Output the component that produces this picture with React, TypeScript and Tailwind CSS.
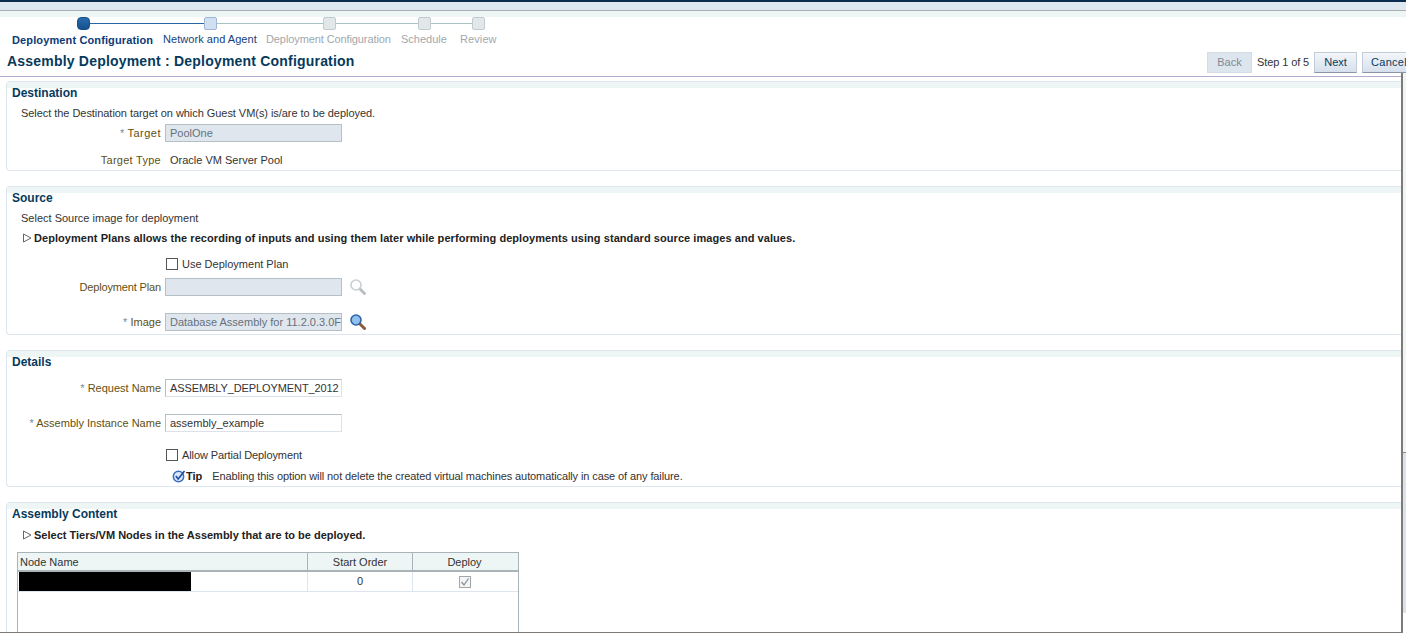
const labelCls = 'w-[154px] shrink-0 text-right text-[#5f5010] whitespace-nowrap';

function Magnifier({ faded }: { faded?: boolean }) {
  return (
    <svg width="18" height="18" viewBox="0 0 18 18" className="ml-[7px] shrink-0">
      <line x1="10.5" y1="10.5" x2="15.5" y2="15.5" stroke={faded ? '#b8c0c0' : '#8a5a3a'} strokeWidth="3" strokeLinecap="round" />
      <circle cx="7" cy="7" r="5" fill={faded ? '#ffffff' : '#8fc0ee'} stroke={faded ? '#c8d0d4' : '#2f62a8'} strokeWidth="1.6" />
    </svg>
  );
}

function Triangle() {
  return (
    <svg width="10" height="10" viewBox="0 0 10 10" className="shrink-0">
      <path d="M1.5 1 L9 5 L1.5 9 Z" fill="#fff" stroke="#555" strokeWidth="0.9" />
    </svg>
  );
}

function Req() {
  return <span className="text-[#7c8a96]">* </span>;
}

function Check({ label, track }: { label: string; track?: string }) {
  return (
    <div className="flex h-[14px] items-center pl-[159px] text-[#333]">
      <span className="h-[12px] w-[12px] border border-[#555] bg-white" />
      <span className={`ml-[4px] ${track ?? ''}`}>{label}</span>
    </div>
  );
}

function Field({ label, req, value, readOnly, icon, className, labelTrack, valueTrack }: { label: string; req?: boolean; value: string; readOnly?: boolean; icon?: 'on' | 'off'; className?: string; labelTrack?: string; valueTrack?: string }) {
  return (
    <div className={`flex h-[18px] items-center ${className ?? ''}`}>
      <div className={labelCls}>
        {req && <Req />}
        <span className={labelTrack}>{label}</span>
      </div>
      <div
        className={`ml-[4px] flex h-[18px] w-[177px] shrink-0 items-center overflow-hidden whitespace-nowrap border px-[4px] ${valueTrack ?? ''} ${
          readOnly ? 'border-[#b4c0c6] bg-[#dfe6ee] text-[#66717c]' : 'border-[#dce3e8] border-t-[#b4c0c6] border-l-[#b4c0c6] bg-white text-[#333]'
        }`}
      >
        {value}
      </div>
      {icon && <Magnifier faded={icon === 'off'} />}
    </div>
  );
}

function Section({ title, h, children, className }: { title: string; h: string; children: React.ReactNode; className?: string }) {
  return (
    <section className={`ml-[6px] rounded-l-[4px] border border-r-0 border-[#dde6ee] ${h} ${className ?? ''}`}>
      <div className="h-[6px] bg-[#eef5f5]" />
      <h2 className="h-[11px] pl-[5px] text-[12px] font-bold leading-[11px] text-[#063a5c]">{title}</h2>
      {children}
    </section>
  );
}

function StepIcon({ kind }: { kind: 'active' | 'next' | 'off' }) {
  const cls =
    kind === 'active'
      ? 'border-[#174f86] bg-gradient-to-b from-[#2a6cae] to-[#16508e] rounded-[4px]'
      : kind === 'next'
        ? 'border-[#9db8d8] bg-[#d2dff0] rounded-[2px]'
        : 'border-[#c2cbce] bg-[#e2e8ea] rounded-[2px]';
  return <span className={`h-[13px] w-[13px] shrink-0 border ${cls}`} />;
}

export default function App() {
  return (
    <div className="flex h-[634px] w-[1406px] flex-col overflow-hidden bg-white font-['Liberation_Sans',Arial,sans-serif] text-[11px] text-[#333]">
      <div className="h-[2px] shrink-0 bg-[#0b2c4e]" />
      <div className="h-[8px] shrink-0 bg-[#dfe8f1]" />
      <div className="h-[1px] shrink-0 bg-[#aab0b2]" />
      <div className="h-[6px] shrink-0 bg-[#eef5f5]" />

      <div className="flex h-[13px] shrink-0 items-center pl-[77px]">
        <StepIcon kind="active" />
        <span className="h-[1px] w-[114px] bg-[#2a66a6]" />
        <StepIcon kind="next" />
        <span className="h-[1px] w-[106px] bg-[#a9c2c2]" />
        <StepIcon kind="off" />
        <span className="h-[1px] w-[82px] bg-[#a9c2c2]" />
        <StepIcon kind="off" />
        <span className="h-[1px] w-[41px] bg-[#a9c2c2]" />
        <StepIcon kind="off" />
      </div>
      <div className="mt-[2px] flex h-[14px] shrink-0 items-center whitespace-nowrap pl-[12px] text-[#a0a8ae]">
        <span className="w-[151px] pt-[2px] font-bold tracking-[0.125px] text-[#0c3a78]">Deployment Configuration</span>
        <span className="w-[103px] tracking-[0.05px] text-[#133f7c]">Network and Agent</span>
        <span className="w-[135px] tracking-[-0.1px]">Deployment Configuration</span>
        <span className="w-[59px]">Schedule</span>
        <span className="tracking-[0.1px]">Review</span>
      </div>

      <div className="mt-[6px] flex h-[21px] shrink-0 items-center">
        <h1 className="w-[1207px] shrink-0 whitespace-nowrap pb-[2px] pl-[7px] text-[14px] font-bold tracking-[0.2px] text-[#063a5c]">Assembly Deployment : Deployment Configuration</h1>
        <div className="flex h-[21px] w-[45px] shrink-0 items-center justify-center border border-[#d4dce4] bg-[#dde5ee] pb-[1px] text-[#7f8a94]">Back</div>
        <span className="ml-[5px] w-[57px] shrink-0 whitespace-nowrap tracking-[-0.1px] text-[#333]">Step 1 of 5</span>
        <div className="flex h-[21px] w-[43px] shrink-0 items-center justify-center border border-[#c2ccd6] border-b-[#8a96a4] bg-gradient-to-b from-[#f3f6fa] to-[#d6e0ec] pb-[1px] text-[#063a5c]">Next</div>
        <div className="ml-[5px] flex h-[21px] w-[54px] shrink-0 items-center justify-center border border-[#c2ccd6] border-b-[#8a96a4] bg-gradient-to-b from-[#f3f6fa] to-[#d6e0ec] pb-[1px] tracking-[0.3px] text-[#063a5c]">Cancel</div>
      </div>

      <div className="flex min-h-0 flex-1">
        <main className="h-[560px] w-[1403px] shrink-0 overflow-hidden border-r-2 border-b border-[#7f7a75] pt-[3px]">
          <div className="h-[1px] bg-[#b3aed0]" />
          <div className="h-[4px]" />

          <Section title="Destination" h="h-[90px]">
            <p className="mt-[7px] h-[14px] pl-[14px] leading-[14px] tracking-[-0.05px]">Select the Destination target on which Guest VM(s) is/are to be deployed.</p>
            <Field className="mt-[4px]" req label="Target" value="PoolOne" readOnly labelTrack="tracking-[0.5px]" />
            <div className="mt-[11px] flex h-[14px] items-center">
              <div className={`${labelCls} tracking-[0.27px]`}>Target Type</div>
              <span className="ml-[9px]">Oracle VM Server Pool</span>
            </div>
          </Section>

          <Section title="Source" h="h-[149px]" className="mt-[15px]">
            <p className="mt-[7px] h-[14px] pl-[14px] leading-[14px]">Select Source image for deployment</p>
            <div className="mt-[6px] flex h-[14px] items-center pl-[15px] font-bold tracking-[0.06px] text-[#222]">
              <Triangle />
              <span className="ml-[2px]">Deployment Plans allows the recording of inputs and using them later while performing deployments using standard source images and values.</span>
            </div>
            <div className="mt-[12px]">
              <Check label="Use Deployment Plan" />
            </div>
            <Field className="mt-[7px]" label="Deployment Plan" value="" readOnly icon="off" labelTrack="tracking-[-0.15px]" />
            <Field className="mt-[17px]" req label="Image" value="Database Assembly for 11.2.0.3.0F" readOnly icon="on" />
          </Section>

          <Section title="Details" h="h-[137px]" className="mt-[15px]">
            <Field className="mt-[11px]" req label="Request Name" value="ASSEMBLY_DEPLOYMENT_2012" valueTrack="tracking-[-0.1px]" />
            <Field className="mt-[17px]" req label="Assembly Instance Name" value="assembly_example" />
            <div className="mt-[16px]">
              <Check label="Allow Partial Deployment" track="tracking-[-0.1px]" />
            </div>
            <div className="mt-[7px] flex h-[14px] items-center pl-[165px]">
              <svg width="14" height="14" viewBox="0 0 14 14" className="shrink-0">
                <circle cx="6.5" cy="7.5" r="5.2" fill="#dbe8f8" stroke="#3a6fc0" strokeWidth="1.5" />
                <path d="M3.8 7 L6.2 10 L12.5 2" fill="none" stroke="#1f4f9e" strokeWidth="1.7" />
              </svg>
              <span className="font-bold text-[#222]">Tip</span>
              <span className="ml-[10px] tracking-[-0.1px]">Enabling this option will not delete the created virtual machines automatically in case of any failure.</span>
            </div>
          </Section>

          <Section title="Assembly Content" h="h-[160px]" className="mt-[15px]">
            <div className="mt-[8px] flex h-[14px] items-center pl-[15px] font-bold text-[#222]">
              <Triangle />
              <span className="ml-[2px]">Select Tiers/VM Nodes in the Assembly that are to be deployed.</span>
            </div>
            <div className="ml-[10px] mt-[10px] h-[120px] w-[502px] border-x border-[#a9b4b8]">
              <div className="grid h-[20px] grid-cols-[289px_105px_1fr] items-center border-y border-b-2 border-[#a9b4b8] bg-[#eef5f5]">
                <span className="pl-[2px] pt-[1px]">Node Name</span>
                <span className="flex h-full items-center justify-center border-l border-[#a9b4b8] pt-[1px]">Start Order</span>
                <span className="flex h-full items-center justify-center border-l border-[#a9b4b8] pr-[2px] pt-[1px]">Deploy</span>
              </div>
              <div className="grid h-[20px] grid-cols-[289px_105px_1fr] items-center border-b border-[#dde6ee]">
                <span className="ml-[1px] h-[19px] w-[172px] bg-black" />
                <span className="flex h-full items-center justify-center border-l border-[#dde6ee]">0</span>
                <span className="flex h-full items-center justify-center border-l border-[#dde6ee] pr-[2px]">
                  <svg width="12" height="12" viewBox="0 0 12 12">
                    <rect x="0.5" y="0.5" width="11" height="11" fill="#f2f4f5" stroke="#a0a6aa" />
                    <path d="M2.5 6 L5 9 L9.5 2.5" fill="none" stroke="#8a9096" strokeWidth="1.3" />
                  </svg>
                </span>
              </div>
            </div>
          </Section>
        </main>

        <div className="flex h-[560px] w-[3px] shrink-0 flex-col">
          <div className="h-[379px] bg-[#eef5f5]" />
          <div className="h-[1px] bg-[#8a8a8a]" />
          <div className="h-[160px] bg-[#d9e3ee]" />
          <div className="flex-1 bg-white" />
        </div>
      </div>
    </div>
  );
}
